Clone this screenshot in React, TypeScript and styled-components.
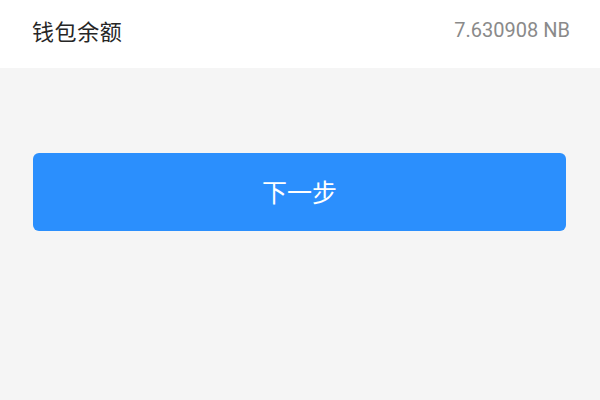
import styled, { createGlobalStyle } from "styled-components";

const Global = createGlobalStyle`
    html, body {
        margin: 0;
        padding: 0;
        background: #f5f5f5;
        font-family: Roboto, "Noto Sans CJK SC", sans-serif;
    }
`;

const Page = styled.div`
    width: 600px;
    height: 400px;
    background: #f5f5f5;
    display: flex;
    flex-direction: column;
`;

// ── balance row ─────────────────────────────────────────────
const BalanceRow = styled.div`
    height: 68px;
    background: #ffffff;
    display: flex;
    align-items: center;
    justify-content: space-between;
    padding: 0 30px 0 32px;
    box-sizing: border-box;
    flex-shrink: 0;
`;

const Label = styled.span`
    font-family: "Noto Sans CJK SC", sans-serif;
    font-size: 22px;
    line-height: 1;
    color: #262626;
    letter-spacing: 0.6px;
    margin-top: -9px;
`;

const Amount = styled.span`
    font-family: Roboto, sans-serif;
    font-size: 20px;
    line-height: 1;
    color: #8a8a8a;
    margin-top: -8px;
`;

// ── action ─────────────────────────────────────────────────
const Actions = styled.div`
    padding: 85px 34px 0 33px;
`;

const PrimaryButton = styled.button`
    width: 100%;
    height: 78px;
    border: none;
    border-radius: 6px;
    background: #2b8ffd;
    color: #ffffff;
    font-family: "Noto Sans CJK SC", sans-serif;
    font-size: 25px;
    cursor: pointer;
    display: flex;
    align-items: center;
    justify-content: center;
    padding: 0 0 2px;
`;

export default function App() {
    return (
        <>
            <Global />
            <Page>
                <BalanceRow>
                    <Label>钱包余额</Label>
                    <Amount>7.630908 NB</Amount>
                </BalanceRow>
                <Actions>
                    <PrimaryButton>下一步</PrimaryButton>
                </Actions>
            </Page>
        </>
    );
}
